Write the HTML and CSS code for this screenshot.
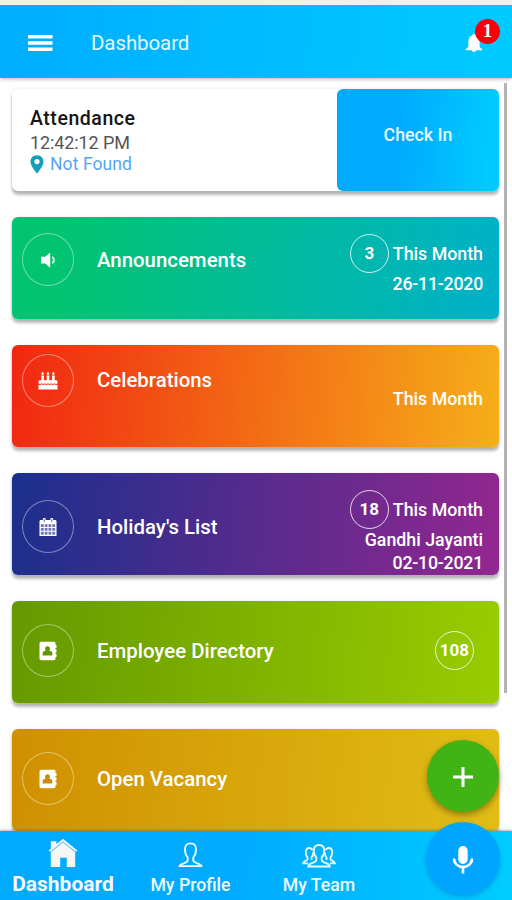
FILE: index.html
```html
<!DOCTYPE html>
<html lang="en">
<head>
<meta charset="utf-8">
<title>Dashboard</title>
<link rel="stylesheet" href="styles.css">
</head>
<body>
<div class="app">
  <header class="topbar">
    <svg class="menu-icon" width="26" height="18" viewBox="0 0 26 18" fill="#fff"><path d="M1 1h24.500v3.400H1zM1 7.300h24.500v3.400H1zM1 13.600h24.500V17H1z"/></svg>
    <h1 class="page-title">Dashboard</h1>
    <div class="alerts">
      <svg width="18" height="20" viewBox="0 0 18 20" fill="#fff"><path d="M9 1c1 0 1.700.7 1.700 1.600 2.500.7 3.900 2.900 3.900 5.700v4.700c0 1.400 1.200 2.200 2.700 3.300v.9H.7v-.9c1.500-1.100 2.700-1.900 2.700-3.300V8.300c0-2.800 1.400-5 3.900-5.700C7.300 1.700 8 1 9 1zM6.800 17.200h4.400c-.2 1.100-1.100 1.700-2.200 1.700s-2-.6-2.200-1.700z"/></svg>
      <span class="alert-count">1</span>
    </div>
  </header>

  <main class="feed">
    <section class="card attendance">
      <div class="attendance-info">
        <h2>Attendance</h2>
        <p class="clock">12:42:12 PM</p>
        <p class="place"><svg width="14" height="19" viewBox="0 0 14 19"><path fill="#12a0b8" fill-rule="evenodd" d="M7 .3c3.700 0 6.500 2.800 6.500 6.400C13.500 11.200 7 18.500 7 18.500S.5 11.200.5 6.700C.5 3.100 3.300.3 7 .3zM7 4a2.600 2.600 0 1 0 0 5.200A2.600 2.600 0 0 0 7 4z"/></svg><span>Not Found</span></p>
      </div>
      <div class="check-in"><span>Check In</span></div>
    </section>

    <section class="card announcements">
      <div class="ring"><svg width="18" height="18" viewBox="0 0 18 18"><path fill="#fff" d="M2 5.800h4.200l5-4.300v15.300l-5-4.300H2z"/><path fill="none" stroke="#fff" stroke-opacity=".75" stroke-width="2" d="M13 6.200c2.500.5 2.500 5.300 0 5.800"/></svg></div>
      <h2>Announcements</h2>
      <div class="meta"><p><b class="count">3</b><span>This Month</span></p><p class="date">26-11-2020</p></div>
    </section>

    <section class="card celebrations">
      <div class="ring"><svg width="20" height="20" viewBox="0 0 20 20" fill="#fff"><path d="M3.300 4.500h2.600V10H3.300zM8.700 4.500h2.600V10H8.700zM14.100 4.500h2.600V10h-2.600zM4.600.5l1.300 2.300c0 1.500-2.600 1.500-2.600 0zM10 .5l1.300 2.300c0 1.500-2.600 1.500-2.600 0zM15.400.5l1.300 2.300c0 1.500-2.600 1.500-2.600 0zM2 9.300h16c1 0 1.500.6 1.500 1.500v1.700c-1.500.7-2 .7-3.200-.3-1.200 1.100-2 1.100-3.200 0-1.200 1.100-2 1.100-3.100 0-1.200 1.100-2 1.100-3.200 0-1.200 1.100-1.900 1.100-3.100 0-1.200 1-1.700 1-3.200.3v-1.700C.5 9.900 1 9.300 2 9.300zM.5 13.700c1.400.5 2.200.3 3.200-.4 1.200.9 2 .9 3.100 0 1.200.9 2 .9 3.200 0 1.100.9 1.900.9 3.100 0 1.200.9 2 .9 3.200 0 1 .7 1.800.9 3.200.4v4.800H.5z"/></svg></div>
      <h2>Celebrations</h2>
      <div class="meta"><p>This Month</p></div>
    </section>

    <section class="card holidays">
      <div class="ring"><svg width="18" height="20" viewBox="0 0 19 20"><path fill="#fff" fill-rule="evenodd" d="M2 2.600h2V1.200C4 .1 7 .1 7 1.200v1.400h5V1.200c0-1.100 3-1.100 3 0v1.400h2c.9 0 1.500.6 1.500 1.400v15.500H.5V4c0-.8.600-1.400 1.500-1.400zM2 7.200V10h3V7.200zM6 7.200V10h3V7.200zM10 7.200V10h3V7.200zM14 7.200V10h3V7.200zM2 11v3h3v-3zM6 11v3h3v-3zM10 11v3h3v-3zM14 11v3h3v-3zM2 15v3h3v-3zM6 15v3h3v-3zM10 15v3h3v-3zM14 15v3h3v-3z"/><path fill="#fff" fill-opacity=".35" d="M2 7h15v11H2z"/><path stroke="#3c3e9e" stroke-width=".9" d="M5.500 1.800v3M13.500 1.800v3"/></svg></div>
      <h2>Holiday's List</h2>
      <div class="meta"><p><b class="count">18</b><span>This Month</span></p><p>Gandhi Jayanti</p><p class="date">02-10-2021</p></div>
    </section>

    <section class="card directory">
      <div class="ring"><svg width="18" height="20" viewBox="0 0 18 20"><path fill="#fff" d="M2.200.7h12.600c1 0 1.700.7 1.700 1.700v1.500h1V7h-1v1.500h1v3.100h-1V13h1v3.100h-1v1.500c0 1-.7 1.700-1.700 1.700H2.200c-1 0-1.700-.7-1.700-1.700V2.400C.5 1.400 1.200.7 2.200.7z"/><path fill="currentColor" d="M8.500 5.200a2.500 2.500 0 0 1 1.700 4.400c2.100.4 3.200 1.500 3.200 3.100v1.700H3.600v-1.700c0-1.600 1.100-2.700 3.200-3.100a2.500 2.500 0 0 1 1.700-4.400z"/></svg></div>
      <h2>Employee Directory</h2>
      <div class="meta"><b class="count">108</b></div>
    </section>

    <section class="card vacancy">
      <div class="ring"><svg width="18" height="20" viewBox="0 0 18 20"><path fill="#fff" d="M2.200.7h12.600c1 0 1.700.7 1.700 1.700v1.500h1V7h-1v1.500h1v3.100h-1V13h1v3.100h-1v1.500c0 1-.7 1.700-1.700 1.700H2.200c-1 0-1.700-.7-1.700-1.700V2.400C.5 1.400 1.200.7 2.200.7z"/><path fill="currentColor" d="M8.500 5.200a2.500 2.500 0 0 1 1.700 4.400c2.100.4 3.200 1.500 3.200 3.100v1.700H3.600v-1.700c0-1.600 1.100-2.700 3.200-3.100a2.500 2.500 0 0 1 1.700-4.400z"/></svg></div>
      <h2>Open Vacancy</h2>
    </section>
    <div class="scrollbar"></div>
  </main>

  <nav class="tabs">
    <div class="tab active">
      <svg width="30" height="30" viewBox="0 0 32 32"><path fill="#f6f6f6" d="M3 3.500h6v5L16 2l13 11.500V31h-9v-10h-7v10H3z"/><path fill="none" stroke="#f6f6f6" stroke-width="1.800" d="M1.300 14 16 2l14.700 12"/><path fill="none" stroke="#38b9f5" stroke-width="1" d="M3 14.700 16 4.200l13 10.500"/></svg>
      <span>Dashboard</span>
    </div>
    <div class="tab profile">
      <svg width="25" height="26" viewBox="0 0 27 28" fill="none" stroke="#eefaff" stroke-width="2"><path d="M13.500 1.500c4.100 0 6 2.500 6 6.500 0 3.600-1 6.500-3 8.600v3.200c0 1.700 1.300 2.300 4.200 3.200 2.700.8 4.300 1.300 4.700 3H1.600c.4-1.700 2-2.200 4.700-3 2.900-.9 4.200-1.500 4.200-3.200v-3.200c-2-2.100-3-5-3-8.600 0-4 1.900-6.500 6-6.500z"/></svg>
      <span>My Profile</span>
    </div>
    <div class="tab team">
      <svg width="34" height="24" viewBox="0 0 34 24" fill="none" stroke="#eefaff" stroke-width="1.800"><path d="M17 1c3.500 0 5.200 2 5.200 5.500 0 3-.9 5.500-2.500 7v2.500c0 1.300 1 1.900 3.800 2.800 2.500.8 4 1.600 4.300 3.700H6.200c.3-2.100 1.800-2.900 4.300-3.700 2.800-.9 3.800-1.500 3.800-2.800v-2.500c-1.600-1.500-2.500-4-2.500-7C11.800 3 13.500 1 17 1z"/><path d="M10.600 6.200C9.900 4.700 8.900 4 7.400 4 4.900 4 3.800 5.500 3.800 8.200c0 2.300.5 4 1.700 5.200v2c0 .9-3.800 1.300-4.500 3.900h5M9.500 16v-2.600c1.200-1.200 1.700-3 1.700-5.200M23.400 6.200C24.100 4.700 25.100 4 26.600 4c2.500 0 3.600 1.500 3.600 4.200 0 2.300-.5 4-1.700 5.200v2c0 .9 3.800 1.300 4.500 3.900h-5M24.500 16v-2.600c-1.200-1.200-1.700-3-1.700-5.200"/></svg>
      <span>My Team</span>
    </div>
  </nav>

  <div class="fab add"><svg width="22" height="22" viewBox="0 0 22 22"><path stroke="#fff" stroke-width="3" d="M11 1v20M1 11h20"/></svg></div>
  <div class="fab voice"><svg width="22" height="30" viewBox="0 0 22 30"><rect x="6.300" y="1" width="9.400" height="18" rx="4.700" fill="#fff"/><path fill="none" stroke="#fff" stroke-width="2.600" d="M2 13.500c0 5 4 8.500 9 8.500s9-3.500 9-8.500M11 22v6.500"/></svg></div>
</div>
</body>
</html>
```
FILE: styles.css
```css
* { box-sizing: border-box; }
body { margin: 0; font-family: Roboto, "Liberation Sans", sans-serif; background: #fff; }
h1, h2, p { margin: 0; }
svg { display: block; flex: none; }

.app {
  position: relative;
  width: 512px;
  height: 900px;
  overflow: hidden;
  display: flex;
  flex-direction: column;
  border-top: 5px solid #f0f0ef;
}

.topbar {
  flex: none;
  display: flex;
  align-items: center;
  height: 73px;
  padding: 2px 28px 0 27px;
  background: linear-gradient(95deg, #00adff, #00cbff);
  box-shadow: 0 1px 4px rgba(0, 0, 0, .3);
}
.page-title {
  margin-left: 38px;
  font-size: 20.500px;
  font-weight: 400;
  line-height: 24px;
  letter-spacing: -.1px;
  color: #e4f8ff;
}
.alerts { position: relative; margin-left: auto; margin-right: 1px; }
.alert-count {
  position: absolute;
  left: 10px;
  top: -14px;
  width: 25px;
  height: 25px;
  border-radius: 50%;
  background: #fa0008;
  color: #fff;
  font: bold 19px/24px "Liberation Serif", serif;
  text-align: center;
}

.feed {
  position: relative;
  flex: 1;
  min-height: 0;
  overflow: hidden;
  display: flex;
  flex-direction: column;
  gap: 26px;
  padding: 11px 13px 0 12px;
}
.card {
  flex: none;
  display: flex;
  height: 102px;
  border-radius: 6px;
  color: #fff;
  box-shadow: 0 4px 3px rgba(60, 60, 70, .36), 0 0 3px rgba(60, 60, 70, .12);
}
.card h2 {
  margin-left: 23px;
  font-size: 20.400px;
  font-weight: 500;
  line-height: 24px;
  white-space: nowrap;
}
.ring {
  flex: none;
  display: flex;
  align-items: center;
  justify-content: center;
  width: 52px;
  height: 53px;
  margin-left: 10px;
  border: 1px solid rgba(255, 255, 255, .42);
  border-radius: 50%;
}

.attendance { background: #fff; }
.attendance-info { flex: 1; padding: 18px 0 0 18px; }
.card.attendance h2 { margin: 0; font-size: 19.500px; letter-spacing: .55px; color: #151515; }
.clock { font-size: 18px; line-height: 23px; letter-spacing: -.1px; color: #555; }
.place { display: flex; align-items: center; gap: 6px; font-size: 17.500px; line-height: 20px; letter-spacing: .1px; color: #56a5f2; }
.check-in {
  width: 162px;
  padding-top: 35px;
  border-radius: 6px;
  background: linear-gradient(95deg, #00aaff 38%, #00caff 92%);
  font-size: 17.800px;
  font-weight: 500;
  line-height: 22px;
  text-align: center;
  color: #e4f7ff;
}

.announcements { background: linear-gradient(95deg, #02c470 10%, #00b1c9); padding-top: 16px; }
.announcements h2 { margin-top: 15px; }
.celebrations { background: linear-gradient(95deg, #f12711, #f5af19); padding-top: 9px; }
.celebrations h2 { margin-top: 14px; }
.holidays { background: linear-gradient(95deg, #1b2f8c, #92278f); padding-top: 27px; }
.holidays h2 { margin-top: 15px; }
.directory { background: linear-gradient(95deg, #659900, #99cd00); padding-top: 23px; }
.vacancy { background: linear-gradient(95deg, #d09000, #e0bd15); padding-top: 23px; }
.directory h2, .vacancy h2 { margin-top: 15px; }
.directory .ring { color: #5f9800; }
.vacancy .ring { color: #cc8a10; }

.meta {
  margin-left: auto;
  padding-right: 16px;
  text-align: right;
  font-size: 17.800px;
  font-weight: 500;
  line-height: 23px;
  white-space: nowrap;
}
.meta p:first-child { display: flex; align-items: center; justify-content: flex-end; gap: 4px; }
.meta .date { letter-spacing: -.25px; }
.count {
  display: flex;
  align-items: center;
  justify-content: center;
  width: 39px;
  height: 39px;
  border: 1.500px solid rgba(255, 255, 255, .8);
  border-radius: 50%;
  font-size: 17px;
  font-weight: 700;
}
.announcements .meta { padding-top: 1px; }
.announcements .meta p + p { margin-top: -1px; }
.celebrations .meta { padding-top: 33px; }
.holidays .meta { margin-top: -10px; }
.holidays .meta p + p { position: relative; top: -1px; }
.directory .meta { padding: 7px 25px 0 0; }

.scrollbar {
  position: absolute;
  right: 5px;
  top: 5px;
  width: 3px;
  height: 610px;
  background: #b5b2b4;
}

.tabs {
  flex: none;
  display: flex;
  height: 69px;
  background: linear-gradient(95deg, #00aaff 45%, #00cdff);
  box-shadow: 0 -1px 2px rgba(90, 90, 90, .45);
  position: relative;
  color: #eefaff;
}
.tab {
  display: flex;
  flex-direction: column;
  align-items: center;
  justify-content: flex-end;
  width: 129px;
  padding-bottom: 4px;
  font-size: 17.700px;
  font-weight: 500;
  line-height: 22px;
  white-space: nowrap;
}
.tab.active { width: 126px; padding-bottom: 5px; font-size: 21px; font-weight: 700; color: #f6fcff; }
.tab.active svg { margin-bottom: 5px; }
.tab.profile svg { margin-bottom: 6px; }
.tab.team { width: 128px; }
.tab.team svg { margin-bottom: 6px; }

.fab {
  position: absolute;
  display: flex;
  align-items: center;
  justify-content: center;
  border-radius: 50%;
  box-shadow: 0 3px 6px rgba(0, 0, 0, .35);
}
.add { left: 427px; top: 735px; width: 72px; height: 72px; background: #40b414; }
.voice { left: 426px; top: 817px; width: 74px; height: 73px; background: #00a5ff; box-shadow: 0 2px 5px rgba(0, 70, 150, .3); }
.fab svg { position: relative; top: 1px; }
```
